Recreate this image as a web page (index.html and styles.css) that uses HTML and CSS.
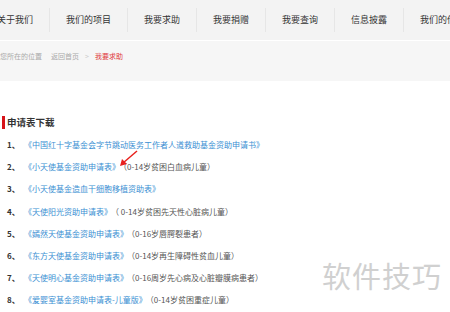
FILE: index.html
```html
<!DOCTYPE html>
<html lang="zh-CN">
<head>
    <meta charset="UTF-8">
    <meta name="viewport" content="width=device-width, initial-scale=1.0">
    <title>我要求助</title>
    <link rel="stylesheet" href="styles.css">
</head>
<body>
    <nav class="topnav">
        <a class="first" href="#">关于我们</a>
        <a href="#">我们的项目</a>
        <a href="#">我要求助</a>
        <a href="#">我要捐赠</a>
        <a href="#">我要查询</a>
        <a href="#">信息披露</a>
        <a href="#">我们的传播</a>
    </nav>

    <div class="crumbs">
        <span>您所在的位置</span>
        <a href="#">返回首页</a>
        <span class="sep">&gt;</span>
        <span class="current">我要求助</span>
    </div>

    <div class="main">
        <h2 class="title">申请表下载</h2>
        <ol class="forms">
            <li><span class="num">1、</span><a href="#">《中国红十字基金会字节跳动医务工作者人道救助基金资助申请书》</a></li>
            <li><span class="num">2、</span><a href="#">《小天使基金资助申请表》</a><span class="note">（0-14岁贫困白血病儿童）</span>
                <svg class="arrow" width="20" height="18" viewBox="0 0 20 18">
                    <path d="M18 1 L4 13" stroke="#e8201c" stroke-width="1.5" fill="none"/>
                    <path d="M1 16 L3 9 L8 14 Z" fill="#e8201c"/>
                </svg>
            </li>
            <li><span class="num">3、</span><a href="#">《小天使基金造血干细胞移植资助表》</a></li>
            <li><span class="num">4、</span><a href="#">《天使阳光资助申请表》</a><span class="note">（ 0-14岁贫困先天性心脏病儿童）</span></li>
            <li><span class="num">5、</span><a href="#">《嫣然天使基金资助申请表》</a><span class="note">（0-16岁唇腭裂患者）</span></li>
            <li><span class="num">6、</span><a href="#">《东方天使基金资助申请表》</a><span class="note">（0-14岁再生障碍性贫血儿童）</span></li>
            <li><span class="num">7、</span><a href="#">《天使明心基金资助申请表》</a><span class="note">（0-16周岁先心病及心脏瓣膜病患者）</span></li>
            <li><span class="num">8、</span><a href="#">《爱婴室基金资助申请表-儿童版》</a><span class="note">（0-14岁贫困重症儿童）</span></li>
        </ol>
        <div class="mark">软件技巧</div>
    </div>
</body>
</html>
```

FILE: styles.css
```css
body {
    margin: 0;
    font-family: "Noto Sans CJK SC", "Liberation Sans", sans-serif;
    color: #333;
    background: #fff;
    overflow: hidden;
}

.topnav {
    display: flex;
    height: 40px;
    align-items: center;
    background: #f3f3f3;
    white-space: nowrap;
    margin-left: -3px;
}

.topnav a {
    font-size: 9px;
    color: #333;
    text-decoration: none;
    padding: 0 16px;
    line-height: 24px;
    border-left: 1px solid #e6e6e6;
}

.topnav a.first {
    border-left: none;
    padding-left: 0;
}

.crumbs {
    height: 40px;
    margin-top: 1px;
    background: #f6f6f6;
    font-size: 7px;
    color: #aaa;
    display: flex;
    align-items: center;
    gap: 6px;
    padding-bottom: 10px;
    box-sizing: border-box;
}

.crumbs a {
    color: #aaa;
    text-decoration: none;
    margin-left: 3px;
}

.crumbs .sep {
    color: #ccc;
}

.crumbs .current {
    color: #e03c3c;
}

.main {
    position: relative;
    padding: 35px 0 0 2px;
}

.title {
    margin: 0;
    font-size: 9.5px;
    font-weight: bold;
    color: #333;
    border-left: 3px solid #d7141a;
    padding-left: 2px;
    line-height: 13px;
}

.forms {
    list-style: none;
    margin: 5px 0 0;
    padding: 0 0 0 5px;
}

.forms li {
    position: relative;
    font-size: 8px;
    line-height: 22.2px;
    white-space: nowrap;
    color: #555;
}

.forms .num {
    font-weight: bold;
    color: #333;
    display: inline-block;
    width: 17px;
}

.forms a {
    color: #3b8fd3;
    text-decoration: none;
}

.forms .note {
    color: #555;
    margin-left: 3px;
}

.arrow {
    position: absolute;
    left: 112px;
    top: -6px;
}

.mark {
    position: absolute;
    left: 322px;
    top: 173px;
    font-size: 29px;
    color: #d0d0d0;
    letter-spacing: 1px;
}
```
